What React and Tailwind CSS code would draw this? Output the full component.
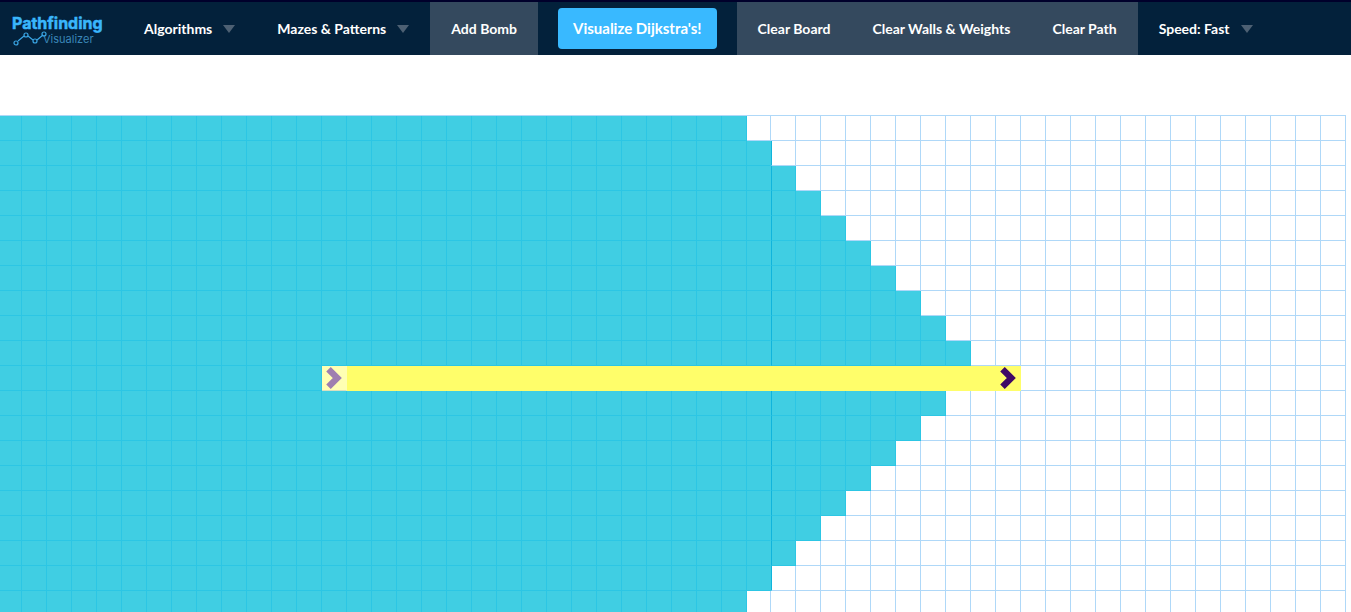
import React from "react";

const ROWS = 20;
const START = 13;
const END = 40;
const MIDDLE = 10;
const SEAM = 30;
const COLUMNS = [22, ...Array(29).fill(25), 24, ...Array(23).fill(25)];

function isVisited(row, col) {
  const distance = Math.abs(row - MIDDLE);
  return col < (row < MIDDLE ? 40 : 39) - distance;
}

function Chevron({ className }) {
  return (
    <svg viewBox="0 0 24 24" className={`block h-6 w-6 ${className}`} aria-hidden="true">
      <path d="M6.5 3.2 15.3 12 6.5 20.8" fill="none" stroke="currentColor" strokeWidth="6.4" />
    </svg>
  );
}

function Cell({ row, col }) {
  if (row === MIDDLE && col === START) {
    return (
      <td className="h-[25px] border-r border-b border-[#ffffb3] border-b-[#d9dfc0] bg-[#ffffb3] p-0">
        <Chevron className="text-[#9f7fb0]" />
      </td>
    );
  }
  if (row === MIDDLE && col > START && col <= END) {
    return (
      <td className="h-[25px] border-r border-b border-[#fffe6a] bg-[#fffe6a] p-0">
        {col === END && <Chevron className="text-[#3f0a66]" />}
      </td>
    );
  }
  const besideSeam = col === SEAM + 1 && isVisited(row, SEAM) ? "border-l border-l-[#10b4dc]" : "";
  if (isVisited(row, col)) {
    const seam = col === SEAM ? "border-r-[#40cee3]" : "";
    return <td className={`h-[25px] border-r border-b border-[#2cc6e4] bg-[#40cee3] p-0 ${seam} ${besideSeam}`} />;
  }
  return <td className={`h-[25px] border-r border-b border-[#afd8f8] bg-white p-0 ${besideSeam}`} />;
}

function Arrow() {
  return (
    <svg viewBox="0 0 12 8" className="h-2 w-3" aria-hidden="true">
      <path d="M0 0h12L6 8z" fill="#4d6073" />
    </svg>
  );
}

function Item({ children, arrow, shaded }) {
  return (
    <button
      type="button"
      className={`flex shrink-0 items-center whitespace-nowrap px-[21px] text-[14px] font-bold text-white ${arrow ? "gap-[11px]" : ""} ${shaded ? "bg-[#34495e]" : ""}`}
    >
      {children}
      {arrow && <Arrow />}
    </button>
  );
}

export default function App() {
  return (
    <div className="h-screen overflow-hidden bg-white font-['Lato','Liberation_Sans',sans-serif]">
      <nav className="flex h-[55px] border-t-2 border-[#00002b] bg-[#03213b]">
        <a href="#home" aria-label="Pathfinding Visualizer" className="w-[123px] shrink-0 pl-3">
          <svg viewBox="0 0 100 44" className="h-11 w-[100px]">
            <text x="0" y="27" fontFamily="Inter, sans-serif" fontSize="16" fontWeight="700" fill="#3ab6fb" stroke="#3ab6fb" strokeWidth="0.5">Pathfinding</text>
            <text x="31" y="41" fontFamily="Inter, sans-serif" fontSize="11" fill="#3a87b8">Visualizer</text>
            <g fill="none" stroke="#3aa6e5" strokeWidth="1.2">
              <path d="M6 39 12 34M16 34 21 38M25 38 31 33" />
              <circle cx="4" cy="41" r="2" /><circle cx="14" cy="33" r="2" />
              <circle cx="23" cy="39" r="2" /><circle cx="32" cy="32" r="2" />
            </g>
          </svg>
        </a>
        <Item arrow>Algorithms</Item>
        <Item arrow>Mazes &amp; Patterns</Item>
        <Item shaded>Add Bomb</Item>
        <button type="button" className="mx-5 my-1.5 shrink-0 rounded bg-[#39b9ff] px-[15px] text-[15px] font-bold whitespace-nowrap text-white">
          Visualize Dijkstra's!
        </button>
        <Item shaded>Clear Board</Item>
        <Item shaded>Clear Walls &amp; Weights</Item>
        <Item shaded>Clear Path</Item>
        <Item arrow>Speed: Fast</Item>
      </nav>
      <main className="pt-[60px]">
        <table className="w-max table-fixed border-separate border-spacing-0 border-t border-[#afd8f8]">
          <colgroup>
            {COLUMNS.map((width, i) => <col key={i} style={{ width }} />)}
          </colgroup>
          <tbody>
            {Array.from({ length: ROWS }, (_, row) => (
              <tr key={row}>
                {COLUMNS.map((_, col) => <Cell key={col} row={row} col={col} />)}
              </tr>
            ))}
          </tbody>
        </table>
      </main>
    </div>
  );
}
